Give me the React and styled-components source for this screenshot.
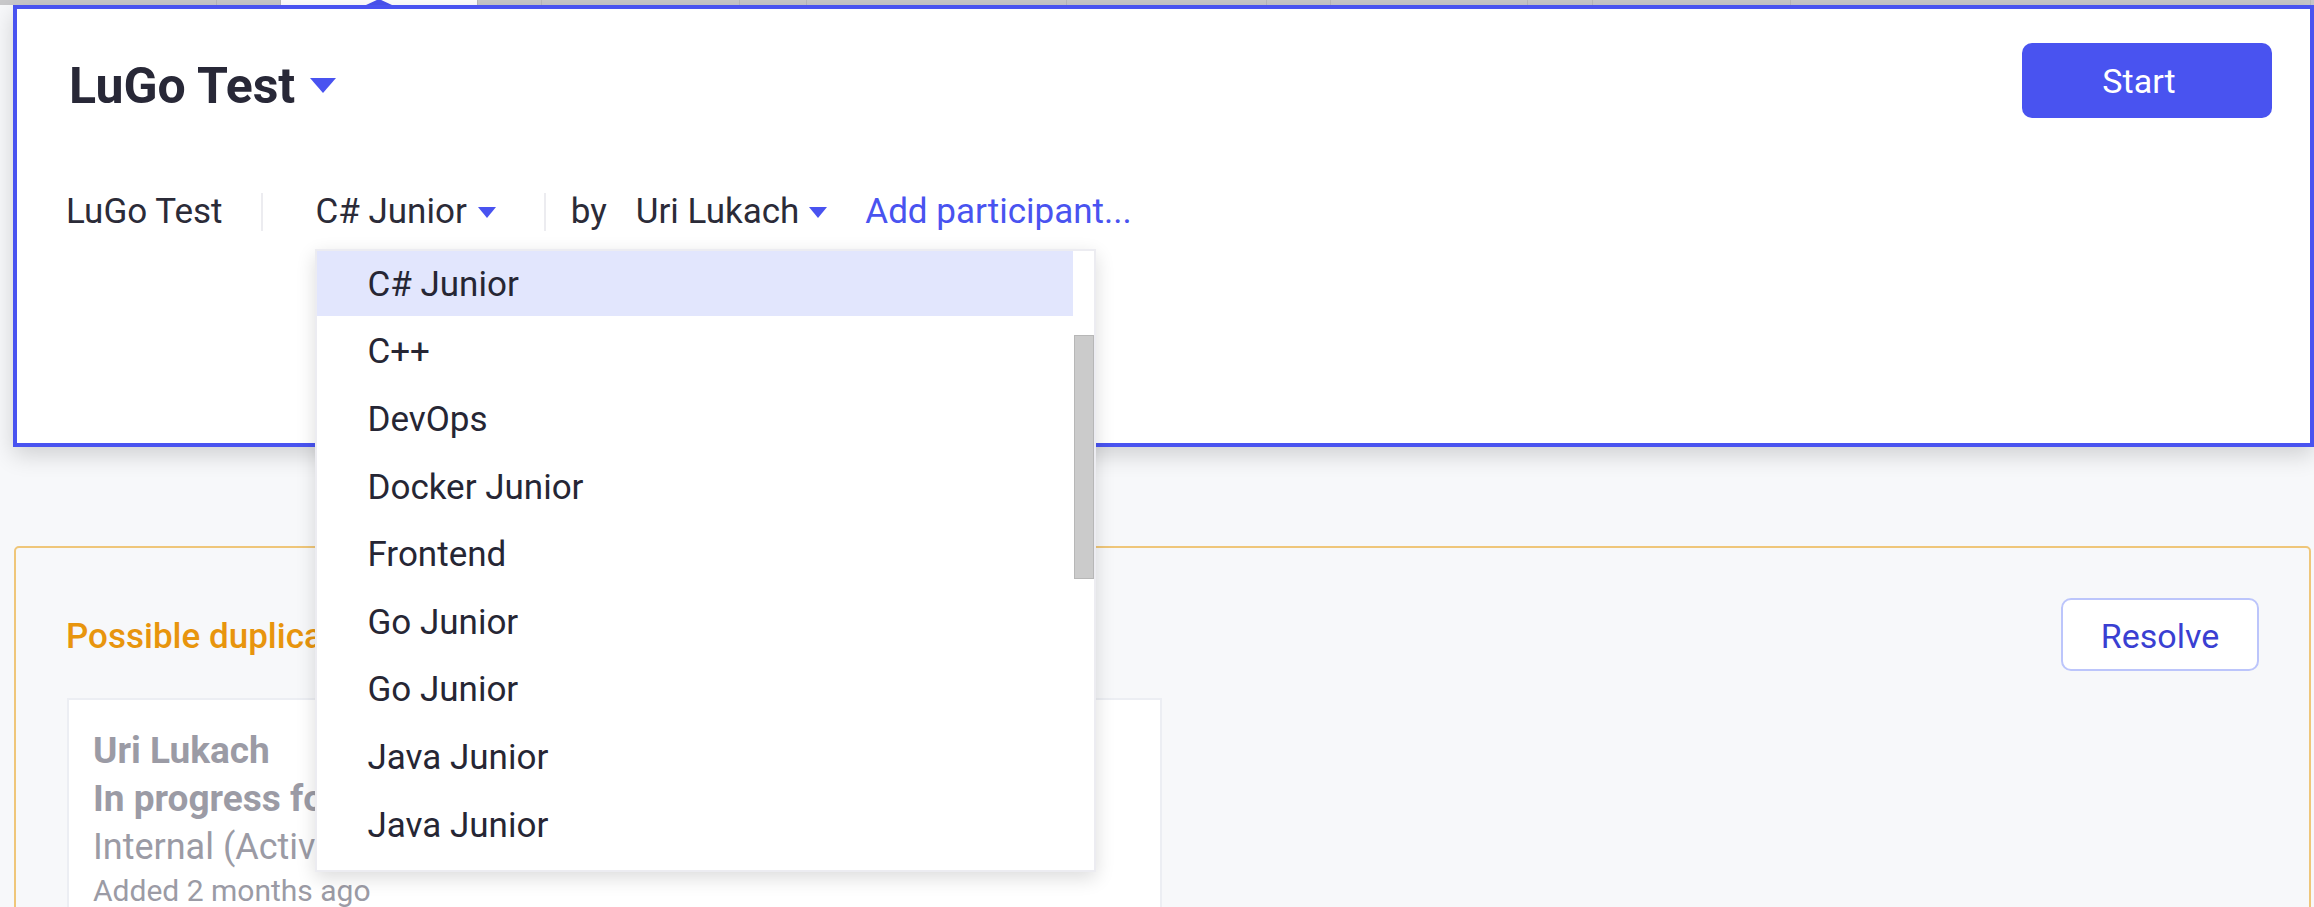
import React from 'react';
import styled, { createGlobalStyle } from 'styled-components';

const GlobalStyle = createGlobalStyle`
  html, body {
    margin: 0;
    padding: 0;
    overflow: hidden;
    background: #f7f8fa;
    font-family: "Roboto", "Liberation Sans", sans-serif;
  }
  * { box-sizing: border-box; }
`;

const Page = styled.div`
  width: 2314px;
  height: 907px;
  overflow: hidden;
  background: #f7f8fa;
`;

/* strip of tabs peeking out above the panel */
const TabStrip = styled.div`
  display: flex;
  height: 5px;
  background: #c8c8ca;
`;

const Tab = styled.div`
  position: relative;
  flex: 0 0 ${(p) => p.w}px;
  border-right: 1px solid #b9b9bb;
  background: ${(p) => (p.active ? '#ffffff' : 'transparent')};
`;

const TabPointer = styled.span`
  position: absolute;
  left: 50%;
  bottom: 0;
  margin-left: -13px;
  width: 0;
  height: 0;
  border-left: 13px solid transparent;
  border-right: 13px solid transparent;
  border-bottom: 6px solid #4953f0;
`;

const Panel = styled.div`
  margin-left: 13px;
  height: 442px;
  background: #fff;
  border: 4px solid #4953f0;
  box-shadow: 0 8px 22px rgba(0, 0, 0, 0.16);
  padding: 34px 38px 0 49px;
  position: relative;
  z-index: 2;
`;

const HeaderRow = styled.div`
  display: flex;
  align-items: center;
  justify-content: space-between;
  height: 75px;
`;

const Title = styled.h1`
  display: flex;
  align-items: center;
  margin: 10px 0 0 3px;
  font-size: 50px;
  font-weight: 700;
  color: #282837;
  line-height: 58px;
`;

const Caret = styled.span`
  display: inline-block;
  width: 0;
  height: 0;
  margin-left: ${(p) => p.gap}px;
  border-left: ${(p) => p.size / 2}px solid transparent;
  border-right: ${(p) => p.size / 2}px solid transparent;
  border-top: ${(p) => Math.round(p.size * 0.56)}px solid #4953f0;
`;

const PrimaryButton = styled.button`
  width: 250px;
  height: 75px;
  padding: 0 16px 0 0;
  border: none;
  border-radius: 10px;
  background: #4953f0;
  color: #fff;
  font-family: inherit;
  font-size: 34px;
  font-weight: 400;
`;

const MetaRow = styled.div`
  display: flex;
  align-items: center;
  height: 40px;
  margin-top: 74px;
  font-size: 35px;
  line-height: 40px;
  color: #2b2b38;
`;

const MetaText = styled.span`
  margin-left: ${(p) => p.ml || 0}px;
  color: ${(p) => (p.link ? '#4953f0' : 'inherit')};
  white-space: nowrap;
`;

const Divider = styled.span`
  width: 2px;
  height: 38px;
  background: #ececf0;
  margin-left: ${(p) => p.ml}px;
`;

const Trigger = styled.span`
  position: relative;
  display: flex;
  align-items: center;
  margin-left: ${(p) => p.ml}px;
`;

const Menu = styled.div`
  position: absolute;
  top: 57px;
  left: 0;
  width: 781px;
  height: 623px;
  display: flex;
  background: #fff;
  border: 2px solid #ececf1;
  box-shadow: 0 6px 18px rgba(0, 0, 0, 0.14);
  overflow: hidden;
  z-index: 5;
`;

const MenuList = styled.ul`
  flex: 1;
  margin: -3px 0 0;
  padding: 0;
  list-style: none;
`;

const MenuItem = styled.li`
  height: 67.6px;
  display: flex;
  align-items: center;
  padding: 6px 0 0 50px;
  font-size: 35px;
  color: #262634;
  background: ${(p) => (p.active ? '#e2e6fd' : 'transparent')};
`;

const ScrollTrack = styled.div`
  flex: 0 0 20px;
  margin-left: 1px;
  padding-top: 84px;
`;

const ScrollThumb = styled.div`
  height: 244px;
  background: #cbcbcb;
  border: 1px solid #b7b7b7;
`;

const DuplicateBox = styled.section`
  margin: 99px 3px 0 14px;
  height: 400px;
  border: 2px solid #efc679;
  border-radius: 5px;
  background: #f7f8fa;
  padding: 50px 50px 0 50px;
`;

const DuplicateHeader = styled.div`
  display: flex;
  align-items: center;
  justify-content: space-between;
  height: 73px;
`;

const DuplicateTitle = styled.h2`
  margin: 4px 0 0;
  font-size: 35px;
  font-weight: 500;
  color: #e8950d;
`;

const OutlineButton = styled.button`
  width: 198px;
  height: 73px;
  padding: 3px 0 0;
  border: 2px solid #bcc5fb;
  border-radius: 10px;
  background: #fff;
  color: #3a3fd2;
  font-family: inherit;
  font-size: 34px;
`;

const Card = styled.div`
  width: 1095px;
  height: 300px;
  margin: 27px 0 0 1px;
  background: #fff;
  border: 2px solid #eceef3;
  padding: 26px 24px;
  color: #9b9ba5;
`;

const CardLine = styled.div`
  font-size: ${(p) => p.size}px;
  line-height: ${(p) => p.lh}px;
  font-weight: ${(p) => (p.bold ? 700 : 400)};
  white-space: nowrap;
`;

const tabs = [217, 64, 197, 64, 198, 67, 260, 200, 64, 197, 65, 198, 520];

const tracks = [
  'C# Junior',
  'C++',
  'DevOps',
  'Docker Junior',
  'Frontend',
  'Go Junior',
  'Go Junior',
  'Java Junior',
  'Java Junior',
  'Java Senior',
];

export default function App() {
  return (
    <Page>
      <GlobalStyle />
      <TabStrip>
        {tabs.map((w, i) => (
          <Tab key={i} w={w} active={i === 2}>
            {i === 2 && <TabPointer />}
          </Tab>
        ))}
      </TabStrip>

      <Panel>
        <HeaderRow>
          <Title>
            LuGo Test
            <Caret size={26} gap={15} />
          </Title>
          <PrimaryButton>Start</PrimaryButton>
        </HeaderRow>

        <MetaRow>
          <MetaText>LuGo Test</MetaText>
          <Divider ml={39} />
          <Trigger ml={52}>
            C# Junior
            <Caret size={19} gap={11} />
            <Menu>
              <MenuList>
                {tracks.map((t, i) => (
                  <MenuItem key={i} active={i === 0}>
                    {t}
                  </MenuItem>
                ))}
              </MenuList>
              <ScrollTrack>
                <ScrollThumb />
              </ScrollTrack>
            </Menu>
          </Trigger>
          <Divider ml={48} />
          <MetaText ml={25}>by</MetaText>
          <Trigger ml={29}>
            Uri Lukach
            <Caret size={19} gap={10} />
          </Trigger>
          <MetaText ml={38} link>
            Add participant...
          </MetaText>
        </MetaRow>
      </Panel>

      <DuplicateBox>
        <DuplicateHeader>
          <DuplicateTitle>Possible duplicate</DuplicateTitle>
          <OutlineButton>Resolve</OutlineButton>
        </DuplicateHeader>
        <Card>
          <CardLine bold size={37} lh={49}>Uri Lukach</CardLine>
          <CardLine bold size={37} lh={48}>In progress for C# Junior</CardLine>
          <CardLine size={36} lh={49}>Internal (Active)</CardLine>
          <CardLine size={30} lh={37}>Added 2 months ago</CardLine>
        </Card>
      </DuplicateBox>
    </Page>
  );
}
